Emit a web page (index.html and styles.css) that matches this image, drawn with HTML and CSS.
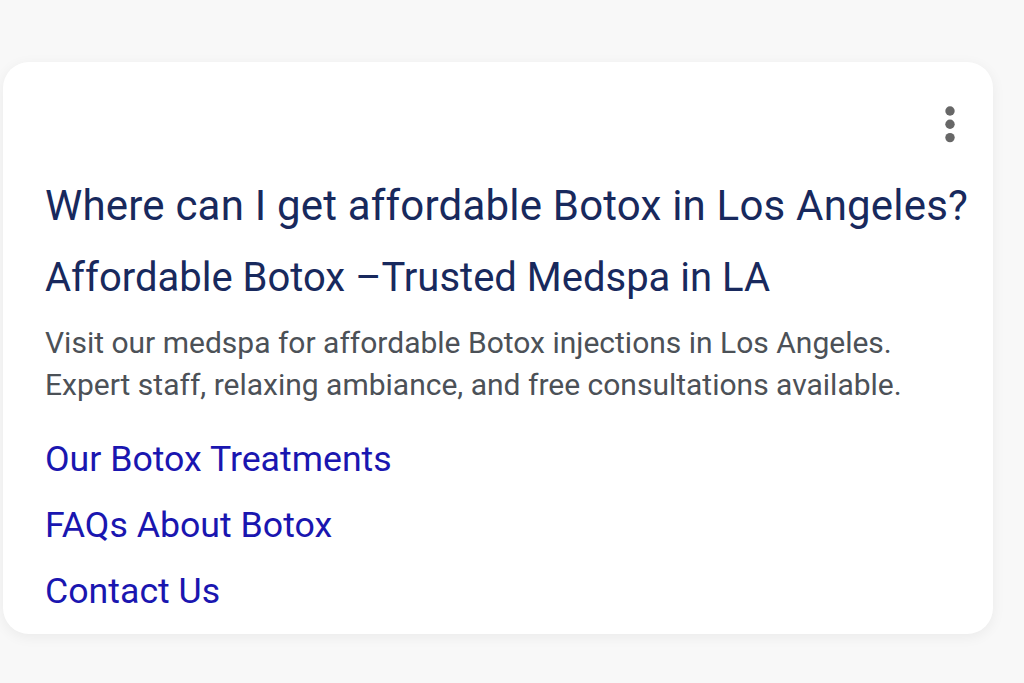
FILE: index.html
```html
<!DOCTYPE html>
<html>
<head>
<meta charset="utf-8">
<link rel="stylesheet" href="styles.css">
</head>
<body>
<div class="page">
  <div class="card">
    <div class="menu">
      <svg width="12" height="40" viewBox="0 0 12 40"><circle cx="6" cy="6" r="4.7" fill="#676767"/><circle cx="6" cy="19.3" r="4.7" fill="#676767"/><circle cx="6" cy="32.6" r="4.7" fill="#676767"/></svg>
    </div>
    <h1 class="question">Where can I get affordable Botox in Los Angeles?</h1>
    <h2 class="title">Affordable Botox –Trusted Medspa in LA</h2>
    <p class="desc">Visit our medspa for affordable Botox injections in Los Angeles.<br>Expert staff, relaxing ambiance, and free consultations available.</p>
    <ul class="links">
      <li><a href="#">Our Botox Treatments</a></li>
      <li><a href="#">FAQs About Botox</a></li>
      <li><a href="#">Contact Us</a></li>
    </ul>
  </div>
</div>
</body>
</html>
```
FILE: styles.css
```css
html, body { margin: 0; padding: 0; }
body {
  background: #f8f8f8;
  font-family: Roboto, "Liberation Sans", sans-serif;
  width: 1024px;
  height: 683px;
  overflow: hidden;
}
.page {
  padding: 62px 31px 0 3px;
}
.card {
  background: #ffffff;
  border-radius: 26px;
  box-shadow: 0 3px 14px rgba(0,0,0,0.06);
  height: 572px;
  box-sizing: border-box;
  padding: 43px 20px 0 42px;
  display: flex;
  flex-direction: column;
}
.menu {
  display: flex;
  justify-content: flex-end;
  padding-right: 17px;
  height: 40px;
}
.question {
  margin: 33px 0 0 0;
  font-size: 42px;
  font-weight: 400;
  line-height: 56px;
  color: #18295d;
  letter-spacing: 0.2px;
}
.title {
  margin: 18px 0 0 0;
  font-size: 40px;
  font-weight: 400;
  line-height: 52px;
  color: #18295d;
}
.desc {
  margin: 18px 0 0 0;
  font-size: 30px;
  line-height: 42px;
  color: #4c5157;
}
.links {
  list-style: none;
  margin: 20px 0 0 0;
  padding: 0;
}
.links li {
  height: 66px;
  line-height: 66px;
}
.links a {
  color: #1a16b0;
  text-decoration: none;
  font-size: 35.7px;
}
```
